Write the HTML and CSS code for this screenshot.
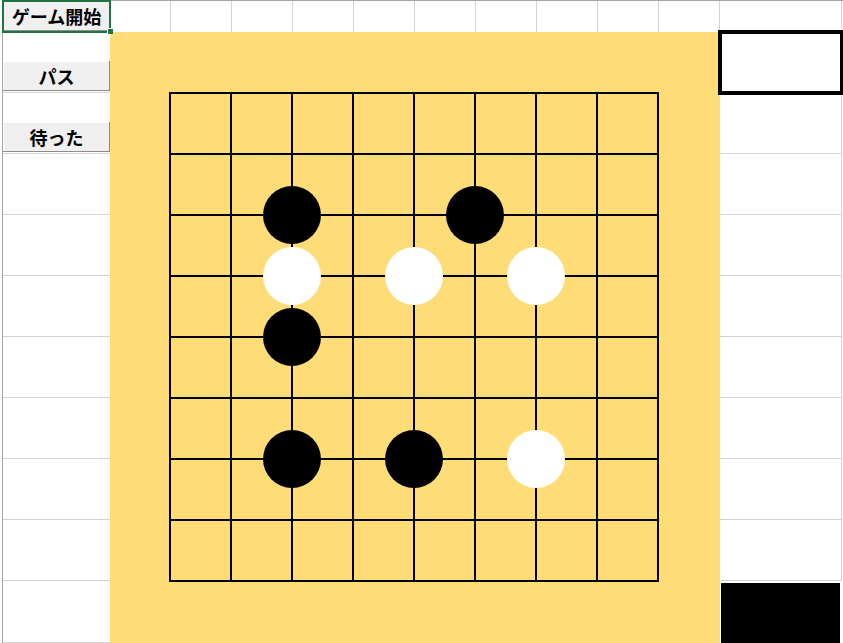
FILE: index.html
```html
<!DOCTYPE html>
<html lang="ja">
<head>
    <meta charset="UTF-8">
    <title>囲碁</title>
    <link rel="stylesheet" href="styles.css">
</head>
<body>
    <div class="sheet">
        <!-- 1行目 -->
        <div class="cell cell-a active"><button class="btn btn-start">ゲーム開始</button></div>
        <div class="cell cell-top"></div>
        <div class="cell cell-top"></div>
        <div class="cell cell-top"></div>
        <div class="cell cell-top"></div>
        <div class="cell cell-top"></div>
        <div class="cell cell-top"></div>
        <div class="cell cell-top"></div>
        <div class="cell cell-top"></div>
        <div class="cell cell-top"></div>
        <div class="cell cell-top"></div>
        <div class="cell"></div>

        <!-- 碁盤 -->
        <div class="board">
            <div class="goban">
                <div class="stones">
                    <div class="stone black" style="grid-area: 3 / 3"></div>
                    <div class="stone black" style="grid-area: 3 / 6"></div>
                    <div class="stone white" style="grid-area: 4 / 3"></div>
                    <div class="stone white" style="grid-area: 4 / 5"></div>
                    <div class="stone white" style="grid-area: 4 / 7"></div>
                    <div class="stone black" style="grid-area: 5 / 3"></div>
                    <div class="stone black" style="grid-area: 7 / 3"></div>
                    <div class="stone black" style="grid-area: 7 / 5"></div>
                    <div class="stone white" style="grid-area: 7 / 7"></div>
                </div>
            </div>
        </div>

        <!-- A列 と L列 -->
        <div class="cell cell-a"><button class="btn">パス</button></div>
        <div class="cell message"></div>
        <div class="cell cell-a"><button class="btn">待った</button></div>
        <div class="cell"></div>
        <div class="cell cell-a"></div>
        <div class="cell"></div>
        <div class="cell cell-a"></div>
        <div class="cell"></div>
        <div class="cell cell-a"></div>
        <div class="cell"></div>
        <div class="cell cell-a"></div>
        <div class="cell"></div>
        <div class="cell cell-a"></div>
        <div class="cell"></div>
        <div class="cell cell-a"></div>
        <div class="cell"></div>
        <div class="cell cell-a"></div>
        <div class="cell"></div>
        <div class="cell cell-a"></div>
        <div class="cell turn"><div class="turn-color"></div></div>
    </div>
</body>
</html>
```

FILE: styles.css
```css
body {
    margin: 0;
    background: #fff;
    font-family: "Noto Sans CJK JP", sans-serif;
    overflow: hidden;
}
.sheet {
    display: grid;
    grid-template-columns: 107px repeat(10, 61px) 122px;
    grid-template-rows: 31px repeat(9, 61px) 1fr;
    height: 100vh;
    box-sizing: border-box;
    margin-left: 2px;
    border-left: 1px solid #a6a6a6;
    border-top: 1px solid #a6a6a6;
}
.cell {
    box-sizing: border-box;
    border-right: 1px solid #d4d4d4;
    border-bottom: 1px solid #d4d4d4;
}
.cell-top {
    border-bottom: none;
}
.cell-a {
    display: flex;
    align-items: flex-end;
    padding-bottom: 1px;
    border-right: none;
}
.active {
    position: relative;
    z-index: 1;
    padding: 0;
    outline: 2px solid #217346;
    outline-offset: -1px;
}
.active::after {
    content: "";
    position: absolute;
    right: -3px;
    bottom: -3px;
    width: 5px;
    height: 5px;
    background: #217346;
    border-left: 1px solid #fff;
    border-top: 1px solid #fff;
}
.btn {
    width: 100%;
    height: 30px;
    padding: 0;
    border: none;
    background: #f0f0f0;
    box-shadow: inset -1px -1px #8c8c8c, inset 1px 1px #fff;
    font-family: "Noto Sans CJK JP", sans-serif;
    font-size: 18px;
    font-weight: 700;
    line-height: 30px;
    color: #000;
}
.btn-start {
    height: 100%;
}
.board {
    grid-column: 2 / 12;
    grid-row: 2 / 12;
    background: #fedc78;
    padding: 60px 0 0 59px;
}
.goban {
    position: relative;
    width: 490px;
    height: 490px;
    background-image:
        linear-gradient(to right, #000 2px, transparent 2px),
        linear-gradient(to bottom, #000 2px, transparent 2px);
    background-size: 61px 100%, 100% 61px;
}
.stones {
    position: absolute;
    left: -30px;
    top: -30px;
    display: grid;
    grid-template-columns: repeat(9, 61px);
    grid-template-rows: repeat(9, 61px);
}
.stone {
    width: 58px;
    height: 58px;
    margin: 2px;
    border-radius: 50%;
}
.black {
    background: #000;
}
.white {
    background: #fff;
}
.message {
    position: relative;
    z-index: 1;
    outline: 4px solid #000;
    outline-offset: -2px;
}
.turn {
    padding: 2px 2px 0 1px;
    border: none;
}
.turn-color {
    height: 100%;
    background: #000;
}
```
